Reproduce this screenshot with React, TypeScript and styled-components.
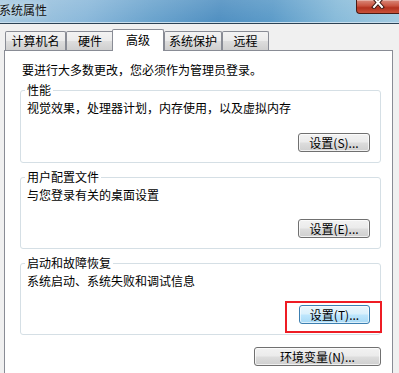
import React from 'react';
import styled, { createGlobalStyle, css } from 'styled-components';

const FONT = '"Noto Sans CJK SC", "Liberation Sans", sans-serif';

const TABS = [
    { label: '计算机名', width: 61, active: false },
    { label: '硬件', width: 48, active: false },
    { label: '高级', width: 52, active: true },
    { label: '系统保护', width: 58, active: false },
    { label: '远程', width: 47, active: false },
];

const GlobalStyle = createGlobalStyle`
    html, body {
        margin: 0;
        padding: 0;
        background: #f0f0f0;
    }
    * {
        box-sizing: border-box;
    }
`;

const Window = styled.div`
    width: 399px;
    height: 373px;
    overflow: hidden;
    background: #f0f0f0;
    font-family: ${FONT};
    font-size: 12px;
    color: #000;
`;

const TitleBar = styled.header`
    height: 24px;
    display: flex;
    justify-content: space-between;
    align-items: flex-start;
    background:
        linear-gradient(180deg, rgba(255, 255, 255, 0.12) 0%, rgba(255, 255, 255, 0) 100%),
        linear-gradient(100deg, #a6c9e0 0%, #8ab8da 22%, #6aa3cd 38%, #4f8fc1 55%, #5a9ac8 68%, #86bad9 84%, #a2cbe2 100%);
    border-bottom: 1px solid #2c4254;
    box-shadow: inset 0 -1px 0 #c9dfee;
`;

const Title = styled.span`
    margin: 2px 0 0 -1px;
    line-height: 16px;
    font-size: 12px;
    color: #111;
    text-shadow: 0 0 6px rgba(255, 255, 255, 0.7);
`;

const CloseButton = styled.div`
    width: 43px;
    height: 14px;
    display: flex;
    justify-content: center;
    align-items: flex-start;
    border: 1px solid #4a1b14;
    border-top: none;
    border-right: none;
    border-bottom-left-radius: 4px;
    background: linear-gradient(180deg, #d98a7c 0%, #c9533f 45%, #b3321f 60%, #c9523a 100%);
    box-shadow: inset 0 1px 0 rgba(255, 255, 255, 0.35);
`;

const Body = styled.div`
    padding: 5px 6px 0 4px;
`;

const TabStrip = styled.div`
    display: flex;
    align-items: flex-end;
    height: 21px;
    padding-left: 1px;
    position: relative;
    z-index: 1;
`;

const Tab = styled.div<{ $active: boolean; $width: number }>`
    width: ${(p) => p.$width}px;
    display: flex;
    justify-content: center;
    align-items: center;
    border: 1px solid #898c95;
    border-bottom: none;
    border-radius: 2px 2px 0 0;
    line-height: 16px;
    ${(p) =>
        p.$active
            ? css`
                  height: 22px;
                  margin: 0 0 -1px -2px;
                  background: #fff;
                  padding-bottom: 1px;
              `
            : css`
                  height: 19px;
                  background: linear-gradient(180deg, #f3f3f3 0%, #ebebeb 48%, #dddddd 52%, #cfcfcf 100%);
              `}
`;

const Panel = styled.section`
    background: #fff;
    border: 1px solid #898c95;
    min-height: 340px;
    padding: 11px 11px 0 15px;
    display: flex;
    flex-direction: column;
`;

const Intro = styled.p`
    margin: 0 0 0 2px;
    line-height: 16px;
`;

const Group = styled.div<{ $height: number }>`
    height: ${(p) => p.$height}px;
    margin-top: ${(p) => (p.$height > 72 ? 12 : 14)}px;
    border: 1px solid #d5dfe5;
    border-radius: 3px;
    padding: 0 10px 10px 4px;
    display: flex;
    flex-direction: column;
    align-items: flex-start;
`;

const Legend = styled.span`
    margin-top: -9px;
    padding: 0 2px;
    background: #fff;
    line-height: 16px;
`;

const Description = styled.span`
    margin: 2px 0 0 2px;
    line-height: 16px;
`;

const Actions = styled.div`
    margin-top: auto;
    align-self: flex-end;
    display: flex;
`;

const Button = styled.button<{ $width: number; $focused?: boolean }>`
    width: ${(p) => p.$width}px;
    height: 19px;
    padding: 0;
    font-family: ${FONT};
    font-size: 12px;
    line-height: 16px;
    color: #000;
    border-radius: 3px;
    border: 1px solid #707070;
    background: linear-gradient(180deg, #f2f2f2 0%, #ebebeb 48%, #dddddd 52%, #cfcfcf 100%);
    box-shadow: inset 0 0 0 1px rgba(255, 255, 255, 0.7);
    ${(p) =>
        p.$focused &&
        css`
            border-color: #3c7fb1;
            background: linear-gradient(180deg, #eaf6fd 0%, #d9f0fc 48%, #bee6fd 52%, #a7d9f5 100%);
            box-shadow: inset 0 0 0 1px rgba(255, 255, 255, 0.6);
        `}
`;

const Highlight = styled.span`
    position: relative;
    display: inline-flex;

    &::after {
        content: '';
        position: absolute;
        top: -4px;
        left: -14px;
        right: -12px;
        bottom: -9px;
        border: 2px solid #ee1c24;
        pointer-events: none;
    }
`;

const Footer = styled.div`
    margin-top: 12px;
    align-self: flex-end;
`;

const CloseGlyph = () => (
    <svg width="14" height="12" viewBox="0 0 14 12" style={{ marginTop: -3 }}>
        <path d="M3 1 L11 10 M11 1 L3 10" stroke="#3a1510" strokeWidth="4" strokeLinecap="square" />
        <path d="M3 1 L11 10 M11 1 L3 10" stroke="#ffffff" strokeWidth="2" strokeLinecap="square" />
    </svg>
);

const App = () => {
    return (
        <Window>
            <GlobalStyle />
            <TitleBar>
                <Title>系统属性</Title>
                <CloseButton>
                    <CloseGlyph />
                </CloseButton>
            </TitleBar>
            <Body>
                <TabStrip>
                    {TABS.map((tab) => (
                        <Tab key={tab.label} $active={tab.active} $width={tab.width}>
                            {tab.label}
                        </Tab>
                    ))}
                </TabStrip>
                <Panel>
                    <Intro>要进行大多数更改，您必须作为管理员登录。</Intro>

                    <Group $height={73}>
                        <Legend>性能</Legend>
                        <Description>视觉效果，处理器计划，内存使用，以及虚拟内存</Description>
                        <Actions>
                            <Button $width={72}>设置(S)...</Button>
                        </Actions>
                    </Group>

                    <Group $height={72}>
                        <Legend>用户配置文件</Legend>
                        <Description>与您登录有关的桌面设置</Description>
                        <Actions>
                            <Button $width={72}>设置(E)...</Button>
                        </Actions>
                    </Group>

                    <Group $height={72}>
                        <Legend>启动和故障恢复</Legend>
                        <Description>系统启动、系统失败和调试信息</Description>
                        <Actions>
                            <Highlight>
                                <Button $width={71} $focused>
                                    设置(T)...
                                </Button>
                            </Highlight>
                        </Actions>
                    </Group>

                    <Footer>
                        <Button $width={127}>环境变量(N)...</Button>
                    </Footer>
                </Panel>
            </Body>
        </Window>
    );
};

export default App;
